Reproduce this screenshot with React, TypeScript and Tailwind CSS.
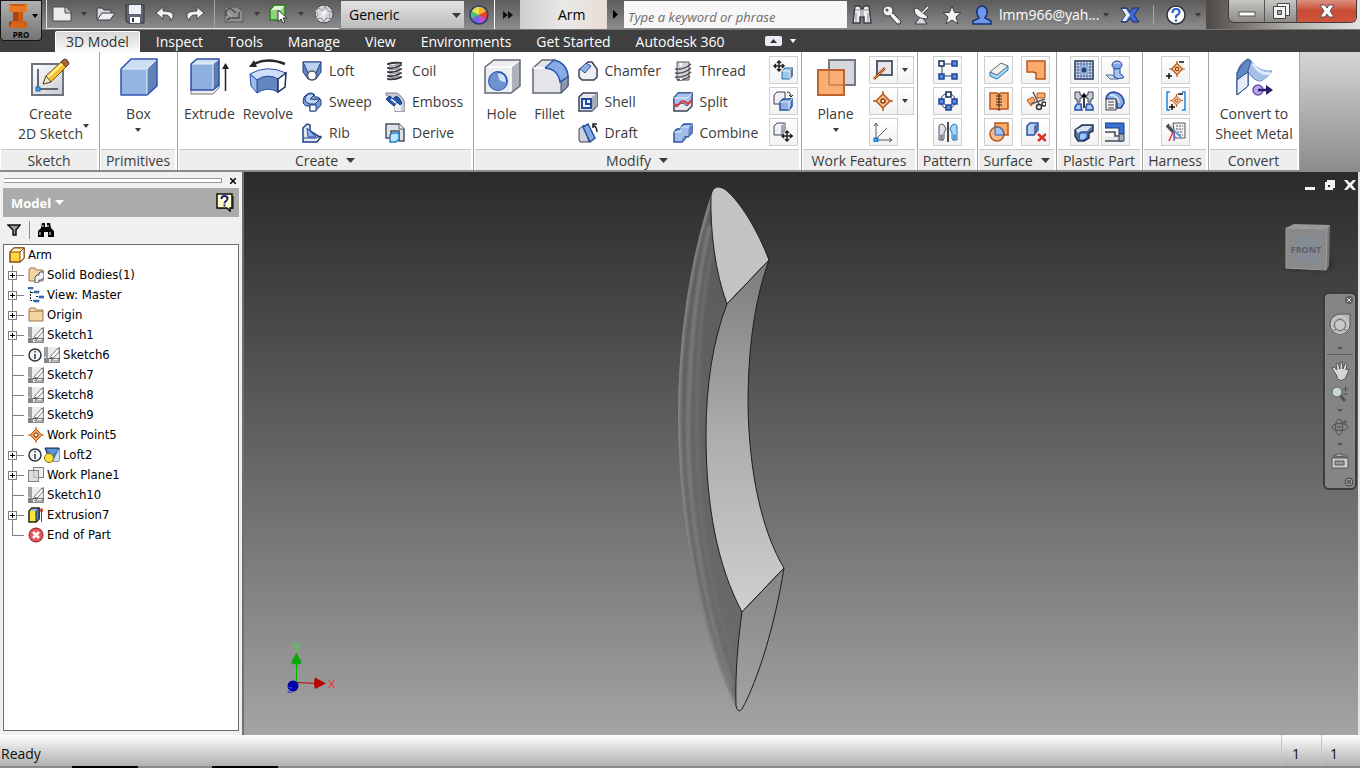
import type { ReactNode } from 'react';
import { clsx } from 'clsx';

type IconProps = { size?: number; children: ReactNode };

const Icon = ({ size = 20, children }: IconProps) => (
  <svg width={size} height={size} viewBox={`0 0 ${size} ${size}`} fill="none" className="shrink-0" aria-hidden="true">
    {children}
  </svg>
);

const NAVY = '#1f3f86';
const BLUE = '#8fb0e0';
const ORANGE = '#fbab6c';
const RUST = '#b8581c';
const INK = '#3c4354';

/* ---------- large ribbon icons (40px) ---------- */

const SketchIcon = () => (
  <Icon size={40}>
    <defs>
      <linearGradient id="sheet" x1="0" y1="0" x2="1" y2="1">
        <stop offset="0" stopColor="#fff" />
        <stop offset="1" stopColor="#c9ccd2" />
      </linearGradient>
    </defs>
    <rect x="2" y="8" width="31" height="31" fill="url(#sheet)" stroke="#70747e" strokeWidth="2" />
    <path d="M8 13v20h20" stroke="#3a3d45" strokeWidth="1.5" />
    <rect x="6" y="31" width="4" height="4" fill="#3f9be0" stroke="#2068b0" />
    <path d="M13 28l3-8L33 4l5 5-17 17z" fill="#f8c02c" stroke="#7a5413" />
    <path d="M17 22L34 6" stroke="#fff0a8" strokeWidth="2" />
    <path d="M13 28l3-8 5 6z" fill="#f5ead6" stroke="#5f4a2b" />
    <path d="M31 6l3-3q4 0 5 5l-3 3z" fill="#a8643f" stroke="#5c3825" />
  </Icon>
);

const BoxIcon = () => (
  <Icon size={40}>
    <path d="M2 13L12 3h26v27L28 39H2z" fill="#94b5e2" />
    <path d="M2 13L12 3h26L28 13z" fill="#cbdef4" />
    <path d="M28 13L38 3v27l-10 9z" fill="#6381b4" />
    <path d="M2 13h26v26M28 13L38 3" stroke="#e6effb" />
    <path d="M2 13L12 3h26v27L28 39H2z" stroke="#2f56ad" strokeWidth="1.5" strokeLinejoin="round" />
  </Icon>
);

const ExtrudeIcon = () => (
  <Icon size={40}>
    <path d="M2 33v5h22l6-6v-5" fill="#eee" stroke="#777" />
    <path d="M2 8l6-5h22v26l-6 5H2z" fill="#8cafe0" />
    <path d="M2 8l6-5h22l-6 5z" fill="#d2e2f6" />
    <path d="M24 8l6-5v26l-6 5z" fill="#5d7bb0" />
    <path d="M2 8h22v26M24 8l6-5" stroke="#e9f1fc" />
    <path d="M2 8l6-5h22v26l-6 5H2z" stroke="#2c50a8" strokeWidth="1.5" />
    <path d="M36.500 35V9" stroke="#222" strokeWidth="1.500" />
    <path d="M33 13l3.500-6 3.500 6z" fill="#222" />
  </Icon>
);

const RevolveIcon = () => (
  <Icon size={40}>
    <path d="M6 8Q20 1 37 8" stroke="#26282c" strokeWidth="2.500" />
    <path d="M1 11L6 4l3 7z" fill="#26282c" />
    <path d="M2 18Q19 8 38 17l-1 14-7 5Q19 30 9 37l-6-7z" fill="#87aade" />
    <path d="M2 18Q19 8 38 17l-8 6Q19 17 9 24z" fill="#cfe0f6" stroke="#2c50a8" />
    <path d="M9 24q11-7 21-1v13Q19 30 9 37z" fill="#6587c0" stroke="#2c50a8" />
    <path d="M30 23l8-6-1 14-7 5z" fill="#fff" stroke="#1f2f5f" strokeWidth="1.500" />
    <path d="M2 18l7 6v13l-6-7z" fill="#9dbce8" stroke="#2c50a8" />
  </Icon>
);

const HoleIcon = () => (
  <Icon size={40}>
    <path d="M3 11l9-7h26v26l-9 7H3z" fill="#eceded" />
    <path d="M29 11l9-7v26l-9 7z" fill="#aeb2ba" />
    <path d="M3 11h26v26M29 11l9-7" stroke="#fff" strokeWidth="1.500" />
    <path d="M3 11l9-7h26v26l-9 7H3z" stroke="#626778" strokeWidth="1.500" />
    <circle cx="16" cy="25" r="9" fill="#cfe1f8" stroke="#2a55b5" strokeWidth="2" />
    <path d="M16 16q-1 11 9 10a9 9 0 1 1-9-10z" fill="#6d92cf" />
  </Icon>
);

const FilletIcon = () => (
  <Icon size={40}>
    <path d="M3 12l9-8h12q13 4 14 16v10l-7 7H3z" fill="#e4e5e8" stroke="#626778" strokeWidth="1.500" />
    <path d="M15 12l9-8q13 3 14 17l-8 5q-2-13-15-14z" fill="#86aee4" stroke="#2c58b8" strokeWidth="1.500" />
    <path d="M31 26l7-5v9l-7 7z" fill="#8d98ac" stroke="#3f4c70" />
    <path d="M3 12h12" stroke="#fff" strokeWidth="1.500" />
  </Icon>
);

const PlaneIcon = () => (
  <Icon size={40}>
    <rect x="13" y="4" width="26" height="25" fill="#d4d7dc" stroke="#747986" strokeWidth="2" />
    <rect x="2" y="14" width="26" height="25" fill="#fbae74" stroke="#c0642b" strokeWidth="2" />
    <path d="M13 14v15h15V14" stroke="#a86a42" />
  </Icon>
);

const SheetMetalIcon = () => (
  <Icon size={40}>
    <path d="M3 17Q6 6 14 3l3 2q9 12 21 10-6 8-11 10-6 1-13-9v14L3 39z" fill="#94b5e4" stroke="#5c79ab" />
    <path d="M17 4q9 13 21 11-5 8-12 10-6-1-13-11z" fill="#a4c1ea" />
    <path d="M19 8q8 12 17 9" stroke="#dfeafa" strokeWidth="3" />
    <path d="M3 17q3-8 11-14l3 2-3 10v15L3 39z" fill="#5f88c6" stroke="#354f82" />
    <path d="M3 24l11-8v14L3 39z" fill="#e4edf9" stroke="#354f82" />
    <circle cx="24" cy="34" r="5" fill="#b7a6e4" stroke="#6d51b0" strokeWidth="1.500" />
    <path d="M24 34h10" stroke="#2e1a6b" strokeWidth="2.500" />
    <path d="M32 29l7 5-7 5z" fill="#2e1a6b" />
  </Icon>
);

/* ---------- small ribbon icons (20px) ---------- */

const LoftIcon = () => (
  <Icon>
    <path d="M1 1h18v10l-5 7H6l-5-7z" fill="#6486bd" stroke={NAVY} />
    <path d="M1 1h18l-5 11H6z" fill="#b9d0ef" stroke={NAVY} />
    <circle cx="10" cy="14.500" r="4.500" fill="#fff" stroke="#4d5568" strokeWidth="1.500" />
  </Icon>
);

const SweepIcon = () => (
  <Icon>
    <path d="M2 5q5-6 10-3l1 3q4-1 6 3v5q-3 4-6 6H8v-5q-6 1-7-4z" fill="#789bd2" stroke={NAVY} />
    <path d="M4 4q5-4 8-1L8 7q5 1 10 0l-5 5H8Q1 10 4 4z" fill="#bfd5f2" stroke={NAVY} />
    <rect x="8" y="13" width="6" height="6" fill="#fff" stroke={NAVY} />
  </Icon>
);

const RibIcon = () => (
  <Icon>
    <path d="M1 5l4-4 3 1v6l8 5 3 1-4 5H1z" fill="#e4e7ee" stroke={NAVY} strokeWidth="1.500" />
    <path d="M5 5l9 9H6z" fill="#8db0e5" stroke="#2b53ac" />
    <path d="M1 15h13l5-2" stroke={NAVY} />
  </Icon>
);

const CoilIcon = () => (
  <Icon>
    <path d="M3 3q6-2 13-1M3 7q7 1 13-3M3 11q7 1 13-3M3 15q7 1 13-3M3 18q7 1 13-2" stroke="#34373c" strokeWidth="2" strokeLinecap="round" />
    <path d="M4 5q6 0 11-2M4 9q6 0 11-2M4 13q6 0 11-2M4 17q6 0 11-2" stroke="#9c9fa4" strokeWidth="1.500" />
  </Icon>
);

const EmbossIcon = () => (
  <Icon>
    <path d="M1 1h11q8 5 8 13v6H10V9L1 3z" fill="#c8cbd2" stroke="#777d8b" />
    <path d="M10 10l6 2v7h-6z" fill="#eef0f3" />
    <path d="M1 7l4-3 3 3 3-3 3 2 3 5-2 2-3-3-3 4-5-4z" fill="#2756ae" stroke="#16377e" />
    <path d="M6 7l5 4" stroke="#cfe0f8" strokeWidth="2" />
  </Icon>
);

const DeriveIcon = () => (
  <Icon>
    <path d="M1 1h13l5 5v12h-5V8H6v7H1z" fill="#dfe2e7" stroke="#4a5060" strokeWidth="1.500" />
    <path d="M14 1v5h5" fill="#fff" stroke="#4a5060" />
    <path d="M5 12l2-2h7v6l-3 3H5z" fill="#c2e2f8" stroke="#1f7fc4" strokeWidth="1.500" />
  </Icon>
);

const ChamferIcon = () => (
  <Icon>
    <path d="M1 9L10 1h4l5 7v8l-3 3H4l-3-3z" fill="#eceef2" stroke={INK} strokeWidth="1.500" />
    <path d="M2 8l6-6 5 3-6 7z" fill={BLUE} stroke="#2b53ac" />
  </Icon>
);

const ShellIcon = () => (
  <Icon>
    <path d="M1 5l4-4h14v13l-5 5H1z" fill="#e6e8ed" stroke={INK} strokeWidth="1.500" />
    <path d="M14 5l5-4v13l-5 5z" fill="#a4acbb" />
    <rect x="4" y="7" width="9" height="9" fill="#f2f7fe" stroke="#1f4aa0" strokeWidth="2" />
    <path d="M8 8v4h4" stroke="#1f4aa0" strokeWidth="2" />
  </Icon>
);

const DraftIcon = () => (
  <Icon>
    <path d="M1 6l5-4 5 17H2l-1-2z" fill="#cdd1d9" stroke={INK} />
    <path d="M5 4l5-3 7 14-5 4z" fill="#86ace4" stroke="#27509f" strokeWidth="1.500" />
    <path d="M19 9q0-5-4-7M15 5V1h4" stroke="#222" strokeWidth="1.500" />
  </Icon>
);

const ThreadIcon = () => (
  <Icon>
    <path d="M4 1h12v18H4z" fill="#d3d5d9" stroke="#555" />
    <path d="M2 8q9 1 16-5M2 12q9 1 16-5M2 16q9 1 16-5M4 19q8 0 13-4" stroke="#4d5054" strokeWidth="1.500" />
    <path d="M8 2v3M8 17v2" stroke="#fff" strokeWidth="2" />
  </Icon>
);

const SplitIcon = () => (
  <Icon>
    <path d="M1 6l4-5h14v13l-5 5H1z" fill="#e7e9ed" stroke={INK} strokeWidth="1.500" />
    <path d="M1 6l4-5h14v8l-5 5q-5-5-8-1t-5-1z" fill="#a3c1ec" stroke="#27509f" />
    <path d="M1 6h13l5-5" stroke="#eaf2fd" />
    <path d="M1 12q3 3 6-1t8 1l4-4" stroke="#e03a35" strokeWidth="2" />
  </Icon>
);

const CombineIcon = () => (
  <Icon>
    <path d="M1 9l3-3h4V4l3-3h8v9l-4 4h-3v2l-3 3H1z" fill="#9fbde9" stroke="#27509f" strokeWidth="1.500" />
    <path d="M1 9h7V4h8M16 4l3-3" stroke="#e2ecfb" />
    <path d="M16 4l3-3v9l-4 4z" fill="#6384bb" />
    <path d="M9 16l3-2v2l-3 3z" fill="#6384bb" />
  </Icon>
);

const MoveFaceIcon = () => (
  <Icon>
    <path d="M6 1v10M1 6h10M4 3l2-2 2 2M4 9l2 2 2-2M3 4L1 6l2 2M9 4l2 2-2 2" stroke="#222" strokeWidth="1.500" />
    <path d="M9 11l3-3h8v7l-3 4H9z" fill="#9ac9ee" stroke="#2a6ca8" />
    <path d="M17 11l3-3v7l-3 4z" fill="#707a8c" />
    <path d="M9 11h8v8" stroke="#e8f5ff" />
  </Icon>
);

const CopyObjectIcon = () => (
  <Icon>
    <path d="M1 4l3-3h8v7l-4 5H1z" fill="#eef0f4" stroke={INK} />
    <path d="M7 11l3-3h9v7l-3 4H7z" fill={BLUE} stroke="#27509f" strokeWidth="1.500" />
    <path d="M7 11h9v8M16 11l3-3" stroke="#e4eefc" />
    <path d="M14 1q4 0 4 5M16 4l2 2 2-2" stroke="#222" />
  </Icon>
);

const MoveBodiesIcon = () => (
  <Icon>
    <path d="M1 4l3-3h8v7l-4 5H1z" fill="#eef0f4" stroke={INK} />
    <path d="M8 4l4-3v7l-4 5z" fill="#a1a8b7" />
    <path d="M14 9v11M9 14h11M12 11l2-2 2 2M12 17l2 2 2-2M11 12l-2 2 2 2M17 12l2 2-2 2" stroke="#222" strokeWidth="1.500" />
  </Icon>
);

const AxisIcon = () => (
  <Icon>
    <rect x="4" y="1" width="15" height="14" fill="#e3e5e9" stroke="#565d70" strokeWidth="2" />
    <path d="M1 19L12 8" stroke="#a14816" strokeWidth="2.500" />
    <path d="M1 19L12 8" stroke="#f19a5c" />
  </Icon>
);

const PointMark = () => (
  <g>
    <path d="M10 0v20M0 10h20" stroke={RUST} strokeWidth="1.500" />
    <path d="M10 3l7 7-7 7-7-7z" fill="#fcc08f" stroke={RUST} strokeWidth="1.500" />
    <circle cx="10" cy="10" r="2" fill="#fff" stroke="#8a3c0d" strokeWidth="1.500" />
  </g>
);

const PointIcon = () => (
  <Icon>
    <PointMark />
  </Icon>
);

const UcsIcon = () => (
  <Icon>
    <path d="M3 1v17h16M3 17L14 6M1 4l2-3 2 3M16 16l3 2-3 2" stroke="#565b66" />
    <rect x="1" y="16" width="4" height="4" fill="#36a0ea" stroke="#1e6fb4" />
  </Icon>
);

const RectPatternIcon = () => (
  <Icon>
    <path d="M4 4h12M4 4v12h12" stroke={INK} />
    <path d="M1 1h5v5H1z" fill="#fff" stroke="#14295a" strokeWidth="1.500" />
    <path d="M14 1h5v5h-5zM1 14h5v5H1zM14 14h5v5h-5z" fill="#5b8be0" stroke="#1b46a0" strokeWidth="1.500" />
  </Icon>
);

const CircPatternIcon = () => (
  <Icon>
    <circle cx="10" cy="10" r="7.500" stroke={INK} />
    <path d="M8 1h5v5H8z" fill="#fff" stroke="#14295a" strokeWidth="1.500" />
    <path d="M1 8h5v5H1zM14 8h5v5h-5zM8 14h5v5H8z" fill="#5b8be0" stroke="#1b46a0" strokeWidth="1.500" />
  </Icon>
);

const MirrorIcon = () => (
  <Icon>
    <path d="M10 0v20" stroke="#111" strokeWidth="1.500" />
    <path d="M1 4q1-3 5-1l2 4-2 4v6l-2 2v-6H3v5H1z" fill="#dcdfe5" stroke="#525a69" />
    <path d="M19 4q-1-3-5-1l-2 4 2 4v6l2 2v-6h1v5h2z" fill="#a9d6f6" stroke="#2478bc" />
  </Icon>
);

const ThickenIcon = () => (
  <Icon>
    <path d="M1 12v4l7 3 11-9V6z" fill="#a6d8f6" stroke="#1f78ba" />
    <path d="M1 12l11-9 7 3-11 9z" fill="#f2f2f2" stroke="#63666c" />
  </Icon>
);

const PatchIcon = () => (
  <Icon>
    <path d="M1 1h18v18h-9v-6l-3-1H1z" fill={ORANGE} stroke={RUST} strokeWidth="1.500" />
  </Icon>
);

const StitchIcon = () => (
  <Icon>
    <path d="M1 2h7l2 1 2-1h7v16h-7l-2 1-2-1H1z" fill={ORANGE} stroke={RUST} strokeWidth="1.500" />
    <path d="M10 3v16M7 5h6M7 8h6M7 11h6M7 14h6" stroke="#3c2412" />
  </Icon>
);

const TrimIcon = () => (
  <Icon>
    <path d="M1 9l6-3 2 3-4 6z" fill={ORANGE} stroke={RUST} />
    <path d="M11 2h8v5h-8z" fill={ORANGE} stroke={RUST} />
    <path d="M7 1l6 12M5 13l14-5" stroke="#55585e" strokeWidth="1.500" />
    <circle cx="13" cy="16" r="2.500" stroke="#333" strokeWidth="1.500" />
    <circle cx="18" cy="13" r="2" stroke="#333" strokeWidth="1.500" />
  </Icon>
);

const SculptIcon = () => (
  <Icon>
    <rect x="6" y="1" width="13" height="12" fill={ORANGE} stroke={RUST} strokeWidth="1.500" />
    <circle cx="8" cy="12" r="7" fill="#fcbc8a" stroke={RUST} strokeWidth="1.500" />
    <path d="M6 5q8-1 9 8H6z" fill="#9fc3f2" stroke="#2059b5" />
  </Icon>
);

const DeleteFaceIcon = () => (
  <Icon>
    <path d="M1 4l3-3h8v7l-4 5H1z" fill="#b9d0f0" stroke="#27509f" strokeWidth="1.500" />
    <path d="M8 4l4-3v7l-4 5z" fill="#56709f" />
    <path d="M12 12l8 7M20 12l-8 7" stroke="#d9302b" strokeWidth="2.500" />
  </Icon>
);

const GrillIcon = () => (
  <Icon>
    <rect x="1" y="1" width="18" height="18" fill="#e3e8f2" stroke="#203462" strokeWidth="1.500" />
    <path d="M4 1v18M7 1v18M10 1v18M13 1v18M16 1v18M1 4h18M1 7h18M1 10h18M1 13h18M1 16h18" stroke="#3a5080" strokeWidth="0.800" />
    <circle cx="10" cy="10" r="5" fill="#8fb0dd" />
    <circle cx="10" cy="10" r="2.500" fill="#2b3e6b" />
  </Icon>
);

const BossIcon = () => (
  <Icon>
    <path d="M1 15h6l6 4H5z" fill="#d8e4f5" stroke="#4e6898" />
    <path d="M9 8h6v6q5 2 3 4-5 2-9-1z" fill="#a8c6f0" stroke="#23489a" />
    <ellipse cx="12" cy="5" rx="5" ry="4" fill="#7fa8e4" stroke="#23489a" />
    <path d="M9 4q3-3 6 0" stroke="#dce8fa" />
  </Icon>
);

const SnapFitIcon = () => (
  <Icon>
    <path d="M1 1h5v3h2v3H6v4H3V8H1zM19 1h-5v3h-2v3h2v4h3V8h2z" fill="#c8ccd4" stroke={INK} />
    <path d="M3 13h4v3l1 3H1v-3zM13 13h4l2 3v3h-7v-3z" fill="#a9c6f2" stroke="#1f4fae" strokeWidth="1.500" />
    <path d="M10 17V4M8 6l2-3 2 3" stroke="#000" strokeWidth="1.500" />
  </Icon>
);

const RuleFilletIcon = () => (
  <Icon>
    <path d="M1 8q1-7 8-7 10 2 10 11l-3 5h-4V9z" fill="#88aee6" stroke="#23489a" strokeWidth="1.500" />
    <path d="M5 4q8 0 9 8" stroke="#d5e4fa" strokeWidth="2" />
    <rect x="1" y="8" width="10" height="11" fill="#f4f4f4" stroke="#3b404a" />
    <path d="M3 11h6M3 14h6M3 17h6" stroke="#3b404a" />
  </Icon>
);

const RestIcon = () => (
  <Icon>
    <path d="M1 8l7-5h11v6l-4 2v5l-5 3H4l-3-5z" fill="#5c74a0" stroke="#26365c" strokeWidth="1.500" />
    <path d="M2 8l7-4h9l-5 5H7l-3 2z" fill="#dde4ef" />
    <path d="M6 11h7v4l-3 3H5z" fill="#9cc7f5" stroke="#1f4fae" />
  </Icon>
);

const LipIcon = () => (
  <Icon>
    <path d="M0 1h19v11h-5V6H0z" fill="#3b6fd0" stroke="#173a85" />
    <path d="M0 10h10v4h7v5H0" stroke="#454b58" strokeWidth="1.500" fill="#e6e8ec" />
    <path d="M0 13h8" stroke="#fff" strokeWidth="3" />
    <path d="M14 12h5v7h-5z" fill="#aab0bc" stroke="#2a3f6b" />
  </Icon>
);

const PinIcon = () => (
  <Icon>
    <g transform="translate(3 1) scale(0.8)">
      <PointMark />
    </g>
    <path d="M0 16h6M3 13v6M13 2h5" stroke="#111" strokeWidth="1.500" />
  </Icon>
);

const PinGroupIcon = () => (
  <Icon>
    <path d="M4 1H1v18h3M16 1h3v18h-3" stroke="#1c86e0" strokeWidth="1.500" />
    <g transform="translate(4 3) scale(0.65)">
      <PointMark />
    </g>
    <path d="M3 16h6M6 13v6M12 3h5" stroke="#111" strokeWidth="1.500" />
  </Icon>
);

const HarnessIcon = () => (
  <Icon>
    <path d="M7 1h12v15H9z" fill="#f0f0f0" stroke="#50545c" />
    <path d="M10 4h7M10 7h7M11 10h6M13 13h4" stroke="#555" strokeDasharray="2 1" />
    <path d="M1 3l7 7" stroke="#4a4e56" strokeWidth="4" />
    <path d="M3 3l6 6" stroke="#b9bcc2" />
    <path d="M7 10l-4 9" stroke="#e2383c" strokeWidth="1.500" />
    <path d="M8 10v9" stroke="#7c4fd6" strokeWidth="1.500" />
    <path d="M8 9l7 6" stroke="#2f8fe4" strokeWidth="1.500" />
  </Icon>
);

/* ---------- title bar icons ---------- */

const NewIcon = () => (
  <Icon>
    <path d="M1 3h13l5 5v9H1z" fill="#ebecee" stroke="#4a4c50" strokeLinejoin="round" />
    <path d="M13 3v6h6" fill="#b9bcc2" stroke="#4a4c50" />
  </Icon>
);

const OpenIcon = () => (
  <Icon>
    <path d="M1 16V4h5l2 2h7v3" fill="#d4d6da" stroke="#3b3d42" />
    <path d="M1 16l5-7h13l-5 7z" fill="#eceef1" stroke="#3b3d42" />
  </Icon>
);

const SaveIcon = () => (
  <Icon>
    <path d="M1 1h18v18H3l-2-2z" fill="#5d6575" stroke="#2c323f" />
    <path d="M4 1h12v9H4z" fill="#eef1f4" />
    <path d="M5 13h10v6H5z" fill="#fff" />
    <path d="M7 14h2v4H7z" fill="#2c323f" />
  </Icon>
);

const UndoIcon = () => (
  <Icon>
    <path d="M8 3L1 9l7 6v-4q7-1 8 6 3-4 2-7-2-3-10-3z" fill="#f1f2f4" stroke="#44464b" strokeLinejoin="round" />
  </Icon>
);

const RedoIcon = () => (
  <Icon>
    <path d="M12 3l7 6-7 6v-4q-7-1-8 6-3-4-2-7 2-3 10-3z" fill="#f1f2f4" stroke="#44464b" strokeLinejoin="round" />
  </Icon>
);

const UpdateIcon = () => (
  <Icon>
    <path d="M1 3h12l6 5v10H1z" fill="#8f8f8f" stroke="#5a5a5a" />
    <path d="M2 12V7l4-3 6 5M8 14h7v-6M3 16l5-3" stroke="#4c4c4c" strokeWidth="1.500" />
    <path d="M4 8l4 5" stroke="#aaa" strokeWidth="2" />
  </Icon>
);

const SelectIcon = () => (
  <Icon>
    <path d="M1 6l4-5h11v10l-4 5H1z" fill="#8ed37a" stroke="#2c7a1f" strokeWidth="1.500" />
    <path d="M2 6l4-4h9l-3 4z" fill="#e2f6dc" />
    <path d="M9 6v12l3-3 2 4 2-1-2-4h4z" fill="#fff" stroke="#333" />
  </Icon>
);

const MaterialIcon = () => (
  <Icon>
    <circle cx="10" cy="10" r="9" fill="#d4d6d9" stroke="#4a4c50" />
    <path d="M5 4l4 3 2-5 3 5 4 1-3 3 2 4-5-1-2 4-3-4-5 1 2-5-3-3z" stroke="#8f9196" />
    <path d="M7 9h6M10 6v8M6 13l7-7" stroke="#fff" />
  </Icon>
);

const ColorWheelIcon = () => (
  <Icon>
    <path d="M10 10V1a9 9 0 0 1 8 5z" fill="#f3b22c" />
    <path d="M10 10l8-4a9 9 0 0 1 0 8z" fill="#e83e2c" />
    <path d="M10 10l8 4a9 9 0 0 1-8 5z" fill="#c14fd0" />
    <path d="M10 10v9a9 9 0 0 1-8-5z" fill="#7561e8" />
    <path d="M10 10l-8 4a9 9 0 0 1 0-8z" fill="#4cc36e" />
    <path d="M10 10L2 6a9 9 0 0 1 8-5z" fill="#e6e24d" />
    <circle cx="10" cy="10" r="9" stroke="#25406f" strokeWidth="1.500" />
  </Icon>
);

const BinocularsIcon = () => (
  <Icon>
    <path d="M3 1h5l1 3h2l1-3h5l2 17h-7v-6H8v6H1z" fill="#eceef0" stroke="#3c3e44" strokeWidth="1.500" />
    <path d="M3 5h5M12 5h5M4 8v9M16 8v9M9 5v6M11 5v6" stroke="#85888e" />
  </Icon>
);

const KeyIcon = () => (
  <Icon>
    <path d="M11 8l8 8-1 3h-3l-7-8" fill="#d0d3d8" stroke="#3c3e44" />
    <circle cx="6" cy="6" r="5" fill="#f2f3f5" stroke="#3c3e44" />
    <circle cx="5" cy="5" r="1.500" fill="#555" />
    <path d="M9 9l7 8" stroke="#fff" strokeWidth="2" />
  </Icon>
);

const DishIcon = () => (
  <Icon>
    <path d="M8 12l-5 7h12l-4-6z" fill="#d5d8dc" stroke="#3c3e44" />
    <path d="M2 4q0 9 12 10l2-2L5 3z" fill="#f2f3f5" stroke="#3c3e44" />
    <path d="M10 8l6-6" stroke="#3c3e44" strokeWidth="3" />
    <path d="M10 8l6-6" stroke="#fff" strokeWidth="1.500" />
  </Icon>
);

const StarIcon = () => (
  <Icon>
    <path d="M10 1l2.500 6.500H19l-5 4.500 2 7-6-4-6 4 2-7-5-4.500h6.500z" fill="#f2f3f5" stroke="#3c3e44" />
  </Icon>
);

const UserIcon = () => (
  <Icon>
    <path d="M1 19v-3l6-3q-3-4-2-8 2-4 5-4t5 4q1 4-2 8l6 3v3z" fill="#6d97ea" stroke="#17336f" strokeWidth="1.500" />
  </Icon>
);

const ExchangeIcon = () => (
  <Icon>
    <path d="M1 3h6l3 4 3-4h6l-5 7 5 7h-6l-3-4-3 4H1l5-7z" fill="#3d6bd2" stroke="#15296b" />
    <path d="M2 4h4l4 6-4 6H2l4-6z" fill="#e7ecf8" />
  </Icon>
);

const HelpIcon = () => (
  <Icon>
    <circle cx="10" cy="10" r="9" fill="#fff" stroke="#30343c" strokeWidth="1.500" />
    <path d="M6.500 8q0-4 3.500-4t3.500 3q0 2-2 3t-1.500 3" stroke="#2f62c4" strokeWidth="2.200" />
    <circle cx="10" cy="15.500" r="1.300" fill="#2f62c4" />
  </Icon>
);

/* ---------- browser tree icons (16px) ---------- */

const PartIcon = () => (
  <Icon size={16}>
    <path d="M1 5l4-4h10v10l-4 4H1z" fill="#ffd83d" stroke="#8a4a10" strokeWidth="1.500" />
    <path d="M1 5l4-4h10l-4 4z" fill="#fff4c0" stroke="#8a4a10" />
    <path d="M11 5l4-4v10l-4 4z" fill="#fff" stroke="#8a4a10" />
  </Icon>
);

const FolderShape = () => <path d="M1 3l1-2h5l1 2h7v11H1z" fill="#f4d3a4" stroke="#9a7446" />;

const FolderIcon = () => (
  <Icon size={16}>
    <FolderShape />
    <path d="M1 4.500h14" stroke="#b8935f" />
  </Icon>
);

const BodiesIcon = () => (
  <Icon size={16}>
    <FolderShape />
    <path d="M7 10l2-2h2V6l1-1h4v6l-3 2h-2v2l-1 1H7z" fill="#f1f3f6" stroke="#445064" />
  </Icon>
);

const ViewIcon = () => (
  <Icon size={16}>
    <path d="M2.500 4v9.500H6M3 5.500h3M8 9.500h3" stroke="#222" strokeDasharray="2 1" />
    <path d="M0 0h5v2H0zM6 4h5v2H6zM11 9h5v2h-5zM6 13h5v2H6z" fill="#3f7fd0" stroke="#173f7d" strokeWidth="0.500" />
  </Icon>
);

const TreeSketchIcon = () => (
  <Icon size={16}>
    <path d="M0 0h16v16H0z" fill="#ececec" />
    <path d="M15.500 0v15.500H4" stroke="#888" />
    <path d="M3 0v11M1 0v10M3 11.500h13" stroke="#555" />
    <path d="M0 11h5v5H0z" fill="#858585" />
    <path d="M6 10l8-9 1 1v3l-6 6z" fill="#fff" stroke="#777" />
    <path d="M7 13q4-3 8-1v2H7z" fill="#f4f4f4" stroke="#777" />
  </Icon>
);

const TreePointIcon = () => (
  <Icon size={16}>
    <path d="M8 0v16M0 8h16" stroke="#c8590c" />
    <path d="M8 2l6 6-6 6-6-6z" fill="#f9a35c" stroke="#c8590c" />
    <circle cx="8" cy="8" r="2" fill="#fff" stroke="#6a3310" />
  </Icon>
);

const TreeLoftIcon = () => (
  <Icon size={16}>
    <path d="M1 1h14v13H6z" fill="#3d74bd" stroke="#102a55" />
    <path d="M2 2h12l-5 7z" fill="#5d94d6" />
    <path d="M15 2v12H9z" fill="#cfdbe9" />
    <circle cx="5" cy="11" r="4.500" fill="#ffe13c" stroke="#8d6d0a" />
  </Icon>
);

const TreePlaneIcon = () => (
  <Icon size={16}>
    <rect x="5.500" y="0.500" width="10" height="10" fill="#efefef" stroke="#808080" />
    <rect x="0.500" y="3.500" width="10" height="11" fill="#cfcfcf" fillOpacity="0.700" stroke="#808080" />
  </Icon>
);

const TreeExtrudeIcon = () => (
  <Icon size={16}>
    <path d="M1 4l3-3h7v11l-3 3H1z" fill="#ffe236" stroke="#222" strokeWidth="1.500" />
    <path d="M8 4l3-3v11l-3 3z" fill="#3f87d6" stroke="#222" />
    <path d="M2 4l2-2h6L8 4z" fill="#8fc0f0" />
    <path d="M13.500 15V3M12 4l1.500-3L15 4z" stroke="#c8171c" />
  </Icon>
);

const EndIcon = () => (
  <Icon size={16}>
    <circle cx="8" cy="8" r="7" fill="#e8525a" stroke="#7d1c26" />
    <path d="M5 5l6 6M11 5l-6 6" stroke="#fff" strokeWidth="2.500" />
  </Icon>
);

const InfoIcon = () => (
  <Icon size={14}>
    <circle cx="7" cy="7" r="6" fill="#f3f7fa" stroke="#2d343c" strokeWidth="1.500" />
    <path d="M7 6v5M7 3v1.500" stroke="#2d343c" strokeWidth="1.500" />
  </Icon>
);

/* ---------- shared bits ---------- */

const Caret = ({ wide }: { wide?: boolean }) => (
  <svg width={wide ? 9 : 6} height={wide ? 5 : 4} viewBox="0 0 6 4" preserveAspectRatio="none" className="shrink-0" aria-hidden="true">
    <path d="M0 0h6L3 4z" fill="currentColor" />
  </svg>
);

const BarButton = ({ label, width = 'w-[30px]', children }: { label: string; width?: string; children: ReactNode }) => (
  <button aria-label={label} className={clsx('flex h-full shrink-0 items-center justify-center text-[#3b3b3b]', width)}>
    {children}
  </button>
);

const BigButton = ({ icon, lines, caret, className }: { icon: ReactNode; lines: string[]; caret?: boolean; className?: string }) => (
  <button className={clsx('flex flex-col items-center gap-2 pt-px leading-5', className)}>
    {icon}
    <span className="flex flex-col items-center">
      {lines.map((line) => (
        <span key={line} className="whitespace-nowrap">{line}</span>
      ))}
      {caret && <span className="pt-1"><Caret /></span>}
    </span>
  </button>
);

type Tool = { icon: ReactNode; name: string };

const ToolColumn = ({ tools, className }: { tools: Tool[]; className?: string }) => (
  <div className={clsx('flex flex-col', className)}>
    {tools.map((tool) => (
      <button key={tool.name} className="flex h-[31px] items-center gap-[7px] whitespace-nowrap">
        {tool.icon}
        {tool.name}
      </button>
    ))}
  </div>
);

const boxed = 'flex h-7 items-center justify-center border border-[#cfcfcf] bg-linear-to-b from-white to-[#f2f2f2]';

const IconColumn = ({ tools }: { tools: (Tool & { menu?: boolean })[] }) => (
  <div className="flex flex-col gap-[3px] pt-px">
    {tools.map((tool) => (
      <div key={tool.name} className="flex">
        <button aria-label={tool.name} className={clsx(boxed, 'w-[29px]')}>{tool.icon}</button>
        {tool.menu && (
          <button aria-label={`${tool.name} options`} className={clsx(boxed, 'w-4 border-l-0')}><Caret /></button>
        )}
      </div>
    ))}
  </div>
);

const Panel = ({ title, width, menu, children }: { title: string; width: string; menu?: boolean; children: ReactNode }) => (
  <section className={clsx('flex shrink-0 flex-col border-r border-[#a3a3a3] bg-white pt-[3px]', width)}>
    <div className="flex flex-1 items-start justify-center">{children}</div>
    <h2 className="mr-[2px] ml-px flex h-[21px] items-center justify-center gap-2 border-t border-[#c9c9c9] bg-[#eeeeee] pt-px whitespace-nowrap">
      {title}
      {menu && <Caret wide />}
    </h2>
  </section>
);

/* ---------- title bar ---------- */

const TitleBar = () => (
  <div className="flex h-[30px] border-b border-[#777] bg-linear-to-b from-[#5c5c5c] to-[#8c8c8c]">
    <div className="ml-1 flex h-full items-center border-b border-l border-[#e8e8e8]">
      <BarButton label="New" width="w-[29px]"><NewIcon /></BarButton>
      <BarButton label="New options" width="w-4"><Caret /></BarButton>
      <BarButton label="Open" width="w-[28px]"><OpenIcon /></BarButton>
      <BarButton label="Save"><SaveIcon /></BarButton>
      <BarButton label="Undo"><UndoIcon /></BarButton>
      <BarButton label="Redo"><RedoIcon /></BarButton>
      <span className="mx-1 h-full w-px bg-[#a5a5a5]" />
      <BarButton label="Update"><UpdateIcon /></BarButton>
      <BarButton label="Update options" width="w-4"><Caret /></BarButton>
      <BarButton label="Select" width="w-[28px]"><SelectIcon /></BarButton>
      <BarButton label="Select options" width="w-4"><Caret /></BarButton>
      <BarButton label="Material"><MaterialIcon /></BarButton>
    </div>
    <div className="relative my-px ml-[2px] w-[123px] shrink-0 bg-linear-to-b from-[#e2e2e2] to-[#bdbdbd] text-[#3a3a3a]">
      <select aria-label="Appearance" defaultValue="Generic" className="h-full w-full appearance-none px-2 pt-px text-black">
        <option>Generic</option>
      </select>
      <span className="pointer-events-none absolute top-3 right-[3px]"><Caret wide /></span>
    </div>
    <div className="flex border-r border-white">
      <BarButton label="Colour wheel"><ColorWheelIcon /></BarButton>
    </div>
    <button aria-label="More commands" className="flex w-[25px] shrink-0 items-center justify-center">
      <svg width="10" height="8" viewBox="0 0 10 8" aria-hidden="true"><path d="M0 0l5 4-5 4zM5 0l5 4-5 4z" fill="#111" /></svg>
    </button>
    <div className="flex w-[87px] shrink-0 items-center bg-linear-to-r from-[#cfcfcf] via-[#e9e9e7] to-[#eadcd6] pt-px pl-[38px] text-black">Arm</div>
    <button aria-label="Expand search" className="flex w-[17px] shrink-0 items-center justify-center">
      <svg width="5" height="9" viewBox="0 0 5 9" aria-hidden="true"><path d="M0 0l5 4.500L0 9z" fill="#000" /></svg>
    </button>
    <input
      type="search"
      aria-label="Search help"
      placeholder="Type a keyword or phrase"
      className="my-px w-[223px] min-w-0 bg-[#f7f7f7] px-1 pt-1 text-[13px] italic placeholder:text-[#6b6b6b]"
    />
    <div className="flex items-center">
      <BarButton label="Find"><BinocularsIcon /></BarButton>
      <BarButton label="Subscription"><KeyIcon /></BarButton>
      <BarButton label="Communication"><DishIcon /></BarButton>
      <BarButton label="Favourites"><StarIcon /></BarButton>
      <BarButton label="Account"><UserIcon /></BarButton>
      <button className="flex w-[118px] items-center gap-1 pt-px pl-[2px] text-white">
        lmm966@yah...
        <span className="text-[#3b3b3b]"><Caret /></span>
      </button>
      <BarButton label="Exchange"><ExchangeIcon /></BarButton>
      <span className="mx-2 h-5 w-px bg-[#a5a5a5]" />
      <BarButton label="Help" width="w-[28px]"><HelpIcon /></BarButton>
      <BarButton label="Help options" width="w-4"><Caret /></BarButton>
    </div>
    <div className="flex flex-1 items-start justify-end bg-linear-to-r from-[#4e4b47] via-[#a9a6a2] to-[#e5e3e1] pr-[3px]">
      <div className="flex h-[23px] overflow-hidden rounded-b-md border border-t-0 border-[#3b3b3b]">
        <button aria-label="Minimize" className="flex w-9 items-center justify-center border-r border-[#555] bg-linear-to-b from-[#c9c7c4] to-[#8d8a86]">
          <svg width="18" height="14" aria-hidden="true"><rect x="1" y="8" width="16" height="4" fill="#fff" stroke="#555" /></svg>
        </button>
        <button aria-label="Restore" className="flex w-8 items-center justify-center border-r border-[#555] bg-linear-to-b from-[#c9c7c4] to-[#8d8a86]">
          <svg width="18" height="18" fill="#f4f4f4" stroke="#444" aria-hidden="true">
            <path d="M5.500 1.500h12v12h-12z" />
            <path d="M1.500 4.500h12v12h-12z" />
            <path d="M5.500 8.500h4v4h-4z" fill="#aaa" />
          </svg>
        </button>
        <button aria-label="Close" className="flex w-[59px] items-center justify-center bg-linear-to-b from-[#dd8f80] via-[#c94a33] to-[#d0553c]">
          <svg width="16" height="14" aria-hidden="true"><path d="M1 1h5l2 3 2-3h5l-4 6 4 6h-5l-2-3-2 3H1l4-6z" fill="#fff" stroke="#555" /></svg>
        </button>
      </div>
    </div>
  </div>
);

const tabs = ['Inspect', 'Tools', 'Manage', 'View', 'Environments', 'Get Started', 'Autodesk 360'];

const TabBar = () => (
  <nav className="flex h-[22px] items-stretch pl-[13px] text-white">
    <button className="mt-px rounded-t-[2px] border border-b-0 border-white bg-linear-to-b from-[#d8d8d8] to-[#fafafa] px-[10px] leading-5 text-[#333]">
      3D Model
    </button>
    <div className="ml-1 flex gap-px">
      {tabs.map((tab) => (
        <button key={tab} className="px-3 pt-[2px] leading-5">{tab}</button>
      ))}
    </div>
    <button aria-label="Minimize ribbon" className="ml-7 flex items-center gap-2">
      <svg width="17" height="10" aria-hidden="true">
        <rect width="17" height="10" rx="2" fill="#e9ecf2" />
        <path d="M5 7l3.500-4L12 7z" fill="#333" />
      </svg>
      <Caret />
    </button>
  </nav>
);

const Header = () => (
  <header className="flex shrink-0 bg-[#3f3f3f]">
    <button className="flex h-[41px] w-[42px] shrink-0 flex-col items-center rounded-b-sm border border-[#161616] bg-linear-to-b from-[#b0b0b0] to-[#747474] pt-px text-[8px] leading-[9px] font-bold text-black">
      <span className="flex items-center gap-1 pl-1">
        <svg width="20" height="28" viewBox="0 0 20 28" aria-hidden="true">
          <path d="M1 2h18v7l-4 1v9l4 1v6H1v-6l4-1V10L1 9z" fill="#c85a12" />
          <path d="M1 2l4 2h10l4-2v7l-4 1H5L1 9z" fill="#e67a24" />
          <path d="M5 10h5v16H1v-6l4-1z" fill="#a9440a" />
          <path d="M5 19l10 1 4 6H1z" fill="#d8661a" />
        </svg>
        <Caret />
      </span>
      PRO
    </button>
    <div className="flex min-w-0 flex-1 flex-col">
      <TitleBar />
      <TabBar />
    </div>
  </header>
);

/* ---------- ribbon ---------- */

const Ribbon = () => (
  <div className="flex h-[120px] shrink-0 border-b-2 border-[#8a8a8a] bg-linear-to-b from-[#d6d6d6] to-[#8c8c8c] text-[#3b3b3b]">
    <Panel title="Sketch" width="w-[100px]">
      <div className="flex items-end">
        <BigButton icon={<SketchIcon />} lines={['Create', '2D Sketch']} className="pl-2" />
        <span className="pb-4"><Caret /></span>
      </div>
    </Panel>
    <Panel title="Primitives" width="w-[78px]">
      <BigButton icon={<BoxIcon />} lines={['Box']} caret />
    </Panel>
    <Panel title="Create" width="w-[296px]" menu>
      <BigButton icon={<ExtrudeIcon />} lines={['Extrude']} />
      <BigButton icon={<RevolveIcon />} lines={['Revolve']} className="ml-2" />
      <ToolColumn
        className="ml-[9px] w-[83px]"
        tools={[
          { icon: <LoftIcon />, name: 'Loft' },
          { icon: <SweepIcon />, name: 'Sweep' },
          { icon: <RibIcon />, name: 'Rib' },
        ]}
      />
      <ToolColumn
        className="w-[82px]"
        tools={[
          { icon: <CoilIcon />, name: 'Coil' },
          { icon: <EmbossIcon />, name: 'Emboss' },
          { icon: <DeriveIcon />, name: 'Derive' },
        ]}
      />
    </Panel>
    <Panel title="Modify" width="w-[328px]" menu>
      <BigButton icon={<HoleIcon />} lines={['Hole']} className="w-12" />
      <BigButton icon={<FilletIcon />} lines={['Fillet']} className="w-12" />
      <ToolColumn
        className="ml-1 w-[95px]"
        tools={[
          { icon: <ChamferIcon />, name: 'Chamfer' },
          { icon: <ShellIcon />, name: 'Shell' },
          { icon: <DraftIcon />, name: 'Draft' },
        ]}
      />
      <ToolColumn
        className="w-24"
        tools={[
          { icon: <ThreadIcon />, name: 'Thread' },
          { icon: <SplitIcon />, name: 'Split' },
          { icon: <CombineIcon />, name: 'Combine' },
        ]}
      />
      <IconColumn
        tools={[
          { icon: <MoveFaceIcon />, name: 'Move Face' },
          { icon: <CopyObjectIcon />, name: 'Copy Object' },
          { icon: <MoveBodiesIcon />, name: 'Move Bodies' },
        ]}
      />
    </Panel>
    <Panel title="Work Features" width="w-[116px]">
      <BigButton icon={<PlaneIcon />} lines={['Plane']} caret className="mr-[13px] ml-[10px]" />
      <IconColumn
        tools={[
          { icon: <AxisIcon />, name: 'Axis', menu: true },
          { icon: <PointIcon />, name: 'Point', menu: true },
          { icon: <UcsIcon />, name: 'UCS' },
        ]}
      />
    </Panel>
    <Panel title="Pattern" width="w-[60px]">
      <IconColumn
        tools={[
          { icon: <RectPatternIcon />, name: 'Rectangular' },
          { icon: <CircPatternIcon />, name: 'Circular' },
          { icon: <MirrorIcon />, name: 'Mirror' },
        ]}
      />
    </Panel>
    <Panel title="Surface" width="w-[79px]" menu>
      <div className="flex gap-2">
        <IconColumn
          tools={[
            { icon: <ThickenIcon />, name: 'Thicken' },
            { icon: <StitchIcon />, name: 'Stitch' },
            { icon: <SculptIcon />, name: 'Sculpt' },
          ]}
        />
        <IconColumn
          tools={[
            { icon: <PatchIcon />, name: 'Patch' },
            { icon: <TrimIcon />, name: 'Trim' },
            { icon: <DeleteFaceIcon />, name: 'Delete Face' },
          ]}
        />
      </div>
    </Panel>
    <Panel title="Plastic Part" width="w-[86px]">
      <div className="flex gap-[2px]">
        <IconColumn
          tools={[
            { icon: <GrillIcon />, name: 'Grill' },
            { icon: <SnapFitIcon />, name: 'Snap Fit' },
            { icon: <RestIcon />, name: 'Rest' },
          ]}
        />
        <IconColumn
          tools={[
            { icon: <BossIcon />, name: 'Boss' },
            { icon: <RuleFilletIcon />, name: 'Rule Fillet' },
            { icon: <LipIcon />, name: 'Lip' },
          ]}
        />
      </div>
    </Panel>
    <Panel title="Harness" width="w-[66px]">
      <IconColumn
        tools={[
          { icon: <PinIcon />, name: 'Place Pin' },
          { icon: <PinGroupIcon />, name: 'Place Pin Group' },
          { icon: <HarnessIcon />, name: 'Harness Properties' },
        ]}
      />
    </Panel>
    <Panel title="Convert" width="w-[91px]">
      <BigButton icon={<SheetMetalIcon />} lines={['Convert to', 'Sheet Metal']} />
    </Panel>
  </div>
);

/* ---------- model browser ---------- */

type TreeNode = { name: string; icon: ReactNode; expandable?: boolean; info?: boolean };

const nodes: TreeNode[] = [
  { name: 'Solid Bodies(1)', icon: <BodiesIcon />, expandable: true },
  { name: 'View: Master', icon: <ViewIcon />, expandable: true },
  { name: 'Origin', icon: <FolderIcon />, expandable: true },
  { name: 'Sketch1', icon: <TreeSketchIcon />, expandable: true },
  { name: 'Sketch6', icon: <TreeSketchIcon />, info: true },
  { name: 'Sketch7', icon: <TreeSketchIcon /> },
  { name: 'Sketch8', icon: <TreeSketchIcon /> },
  { name: 'Sketch9', icon: <TreeSketchIcon /> },
  { name: 'Work Point5', icon: <TreePointIcon /> },
  { name: 'Loft2', icon: <TreeLoftIcon />, expandable: true, info: true },
  { name: 'Work Plane1', icon: <TreePlaneIcon />, expandable: true },
  { name: 'Sketch10', icon: <TreeSketchIcon /> },
  { name: 'Extrusion7', icon: <TreeExtrudeIcon />, expandable: true },
  { name: 'End of Part', icon: <EndIcon /> },
];

const Branch = ({ expandable, last }: { expandable?: boolean; last?: boolean }) => (
  <svg width="24" height="20" shapeRendering="crispEdges" fill="none" stroke="#808080" className="shrink-0" aria-hidden="true">
    <path d={last ? 'M8.500 0v10.500h11' : 'M8.500 0v20M8.500 10.500h11'} />
    {expandable && (
      <>
        <rect x="4.500" y="6.500" width="8" height="8" fill="#fff" />
        <path d="M6 10.500h5M8.500 8v5" stroke="#000" />
      </>
    )}
  </svg>
);

const Browser = () => (
  <aside className="flex w-[244px] shrink-0 flex-col border-r-2 border-[#707070] bg-[#f0f0f0]">
    <div className="flex h-4 items-center justify-between pt-px pr-[6px] pl-1">
      <span className="mr-2 h-[5px] flex-1 border-y border-r border-[#9a9a9a] bg-white" />
      <button aria-label="Close browser" className="flex">
        <svg width="6" height="6" stroke="#000" strokeWidth="1.500" aria-hidden="true"><path d="M0 0l6 6M6 0L0 6" /></svg>
      </button>
    </div>
    <div className="mx-[3px] flex h-[29px] items-center justify-between bg-[#ababab] pr-[5px] pl-2">
      <button className="flex items-center gap-1 text-[13px] font-bold text-white">
        Model <Caret wide />
      </button>
      <button aria-label="Help">
        <svg width="18" height="19" viewBox="0 0 18 19" aria-hidden="true">
          <path d="M3 3h15v13h-3v3l-3-3H3z" fill="#555" />
          <path d="M1 1h15v14h-2v3l-3-3H1z" fill="#ffffc8" stroke="#111" strokeWidth="1.500" />
          <path d="M5.500 6q0-3 3-3t3 2.500q0 1.500-1.500 2.500t-1.500 2.500" stroke="#1b1f8e" strokeWidth="2" fill="none" />
          <rect x="7.500" y="11.500" width="2" height="2" fill="#1b1f8e" />
        </svg>
      </button>
    </div>
    <div className="flex h-[27px] items-center gap-2 pb-px pl-[7px]">
      <button aria-label="Filter">
        <svg width="14" height="12" aria-hidden="true"><path d="M1 1h12L9 6v5H6V6z" fill="#999" stroke="#111" strokeWidth="1.500" /></svg>
      </button>
      <span className="h-[18px] w-px bg-[#8a8a8a]" />
      <button aria-label="Find">
        <svg width="16" height="14" aria-hidden="true">
          <path d="M4 0h3v4h2V0h3l1 5 3 3v6h-6V9H6v5H0V8l3-3z" fill="#000" />
          <path d="M2 9v3M12 9v3M5 2v2M10 2v2" stroke="#fff" />
        </svg>
      </button>
    </div>
    <ul className="mx-[3px] mb-1 min-h-0 flex-1 overflow-hidden border border-[#6c6c6c] bg-white font-['DejaVu_Sans_Condensed','DejaVu_Sans',sans-serif] text-[13px] text-black">
      <li className="flex h-5 items-center gap-[3px] pl-[5px]"><PartIcon />Arm</li>
      {nodes.map((node, i) => (
        <li key={node.name} className="flex h-5 items-center gap-[3px]">
          <span className="flex items-center">
            <Branch expandable={node.expandable} last={i === nodes.length - 1} />
            {node.info && <span className="mr-[2px]"><InfoIcon /></span>}
            {node.icon}
          </span>
          {node.name}
        </li>
      ))}
    </ul>
  </aside>
);

/* ---------- graphics window ---------- */

// Curved arm body, 110 x 530
const ArmModel = () => (
  <svg width="110" height="530" viewBox="676 185 110 530" className="absolute top-[13px] left-[432px]" role="img" aria-label="Arm part">
    <defs>
      <linearGradient id="side" x1="0" y1="0" x2="0" y2="1">
        <stop offset="0" stopColor="#595959" />
        <stop offset="0.500" stopColor="#646464" />
        <stop offset="1" stopColor="#6c6c6c" />
      </linearGradient>
      <linearGradient id="inner" x1="0" y1="0" x2="0" y2="1">
        <stop offset="0" stopColor="#7c7c7c" />
        <stop offset="0.500" stopColor="#adadad" />
        <stop offset="1" stopColor="#cfcfcf" />
      </linearGradient>
      <linearGradient id="foot" x1="0" y1="0" x2="0" y2="1">
        <stop offset="0" stopColor="#858585" />
        <stop offset="1" stopColor="#a3a3a3" />
      </linearGradient>
      <clipPath id="side-clip">
        <path d="M711 195C688 265 678 345 678 420C679 535 704 642 736 707L742 612C717 565 706 505 706 435C706 385 713 340 727 304Z" />
      </clipPath>
      <filter id="blend" x="-50%" y="-5%" width="200%" height="110%"><feGaussianBlur stdDeviation="1.500" /></filter>
    </defs>
    <path d="M711 195C688 265 678 345 678 420C679 535 704 642 736 707L742 612C717 565 706 505 706 435C706 385 713 340 727 304Z" fill="url(#side)" />
    <g clipPath="url(#side-clip)" filter="url(#blend)" fill="none">
      <path d="M711 195C688 265 678 345 678 420C679 535 704 642 736 707" stroke="#888" strokeWidth="5" />
      <path d="M710 225C693 295 688 380 688 440C690 530 709 625 733 687" stroke="#7b7b7b" strokeWidth="4" />
      <path d="M714 240C699 305 696 380 697 440C698 530 715 610 737 672" stroke="#6f6f6f" strokeWidth="3" />
    </g>
    <path d="M711 195C713 186 719 185 726 190C741 203 757 229 769 260L727 304C715 272 710 230 711 195Z" fill="#c3c3c3" stroke="#1e1e1e" />
    <path d="M727 304L769 260C754 302 748 350 748 405C749 472 762 532 784 568L742 612C717 565 706 505 706 435C706 385 713 340 727 304Z" fill="url(#inner)" stroke="#1e1e1e" />
    <path d="M742 612L784 568C775 625 758 680 742 709Q738 714 736 706C735 675 738 640 742 612Z" fill="url(#foot)" stroke="#1e1e1e" />
  </svg>
);

const Triad = () => (
  <svg width="60" height="60" viewBox="280 640 60 60" className="absolute bottom-[35px] left-9" aria-hidden="true">
    <path d="M296.500 682V662" stroke="#00b400" />
    <path d="M291 663l5.500-10.500 5.500 10.500q-5 3-11 0z" fill="#07a807" />
    <path d="M297 682.500l20 1" stroke="#c00000" />
    <path d="M315 677.500l11 6-11 5.500q-2-6 0-11.500z" fill="#b40606" />
    <circle cx="293" cy="686" r="5.500" fill="#0404a4" />
    <text x="293" y="651" fontSize="11" fill="#35e035" fontFamily="Liberation Sans, sans-serif">Y</text>
    <text x="328" y="688" fontSize="11" fill="#f02a2a" fontFamily="Liberation Sans, sans-serif">X</text>
    <text x="287" y="693" fontSize="9" fill="#3b3bf0" fontFamily="Liberation Sans, sans-serif">Z</text>
  </svg>
);

const ViewCube = () => (
  <svg width="60" height="60" viewBox="1278 218 60 60" className="absolute top-[46px] right-5" role="img" aria-label="View cube, front">
    <defs>
      <filter id="soft"><feGaussianBlur stdDeviation="2" /></filter>
    </defs>
    <path d="M1284 266l44 5 6-8-4-4z" fill="#222" opacity="0.600" filter="url(#soft)" />
    <path d="M1286 228l8-4 36 1-2 4z" fill="#999" />
    <path d="M1327 229l3-4-1 41-3 5z" fill="#777" />
    <path d="M1286 228l41 1-1 41-40-2z" fill="#8a8a8a" stroke="#a0a0a0" />
    <rect x="1293" y="236" width="26" height="26" fill="#858b93" />
    <text x="1306" y="253" textAnchor="middle" fontSize="9" fontWeight="bold" fill="#5c6064" fontFamily="Open Sans, sans-serif">FRONT</text>
  </svg>
);

const NavBar = () => (
  <div className="absolute top-[120px] right-px flex w-[34px] flex-col items-center rounded-md border-2 border-[#3c3c3c] bg-[#858585] ring-1 ring-[#8e8e8e]/60 ring-inset">
    <svg width="30" height="194" viewBox="0 0 30 194" fill="none" aria-hidden="true">
      <circle cx="24" cy="6" r="4" fill="#5e5e5e" />
      <path d="M22 4l4 4M26 4l-4 4" stroke="#ddd" />
      <path d="M15 20h10v11a10 10 0 1 1-10-11z" fill="#b9b9b9" stroke="#555" />
      <circle cx="15" cy="31" r="8.500" stroke="#d6d6d6" />
      <circle cx="15" cy="31" r="5.500" fill="#c9c9c9" stroke="#666" />
      <path d="M11 35l-4 4M19 35l4 4" stroke="#666" />
      <path d="M12 53h6l-3 3zM12 115h6l-3 3zM12 149h6l-3 3z" fill="#555" />
      <path d="M2 60.500h26" stroke="#5c5c5c" />
      <path d="M12 82q-4-6-5-8l2-1 3 3-1-6 2-1 2 6V68h2l1 7 2-6 2 1-1 6 2-1 1 1-4 9q-4 3-8 0z" fill="#d5d5d5" stroke="#555" />
      <path d="M15 101l5 6" stroke="#555" strokeWidth="3" />
      <circle cx="12" cy="98" r="5" fill="#c8d4d6" stroke="#606060" />
      <path d="M18 95h5M20.500 92.500v5M18 100h5" stroke="#505050" />
      <ellipse cx="15" cy="133" rx="8" ry="3.500" stroke="#505050" />
      <ellipse cx="14" cy="133" rx="3.500" ry="8" stroke="#505050" />
      <path d="M17 128h5M12 133h4M20 126v4" stroke="#505050" />
      <path d="M7 164h16v10H7z" fill="#ccc" stroke="#555" />
      <path d="M10 167h9v4h-9z" fill="#999" stroke="#555" />
      <path d="M8 162l8-3v2h6v2z" fill="#bbb" stroke="#555" />
      <circle cx="24" cy="188" r="4" fill="#999" stroke="#444" />
      <path d="M22 187h4M22 189h4" stroke="#333" />
    </svg>
  </div>
);

const Viewport = () => (
  <main className="relative flex-1 overflow-hidden border-r-2 border-[#e4e4e4] bg-linear-to-b from-[#2b2b2b] to-[#a4a4a4]">
    <div className="absolute top-[7px] right-[2px] flex gap-2">
      {['M1 8h10v3H1z', 'M3 1h8v8H9v2H1V3h2zM4 6v2h2V6z', 'M0 1h3l3 3 3-3h3L8 6l4 5H9L6 8l-3 3H0l4-5z'].map((d, i) => (
        <button key={d} aria-label={['Minimize document', 'Restore document', 'Close document'][i]}>
          <svg width="12" height="13" aria-hidden="true"><path d={d} fill="#f3f3f3" fillRule="evenodd" /></svg>
        </button>
      ))}
    </div>
    <ArmModel />
    <ViewCube />
    <NavBar />
    <Triad />
  </main>
);

const StatusBar = () => (
  <footer className="shrink-0">
    <div className="flex h-[31px] items-center justify-between bg-linear-to-b from-white to-[#b0b0b0] pl-px text-[#111]">
      <span className="pt-[6px]">Ready</span>
      <div className="flex h-full">
        <span className="flex w-10 items-center border-l border-[#c4c4c4] pt-[6px] pl-[10px]">1</span>
        <span className="flex w-[39px] items-center border-l border-[#c4c4c4] pt-[6px] pl-2">1</span>
      </div>
    </div>
    <div className="flex h-[2px] items-stretch bg-[#8a8a8a]">
      <span className="ml-[72px] w-[66px] bg-black" />
      <span className="ml-[74px] w-[66px] bg-black" />
    </div>
  </footer>
);

export default function App() {
  return (
    <div className="flex h-screen flex-col overflow-hidden font-['Open_Sans','Noto_Sans',sans-serif] text-[14px] leading-5">
      <Header />
      <Ribbon />
      <div className="flex min-h-0 flex-1">
        <Browser />
        <Viewport />
      </div>
      <StatusBar />
    </div>
  );
}
